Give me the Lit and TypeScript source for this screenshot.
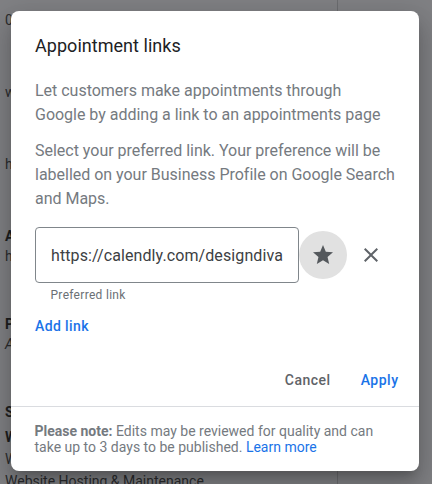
import { LitElement, html, css, svg } from "lit";
import { customElement } from "lit/decorators.js";

@customElement("page-backdrop")
class PageBackdrop extends LitElement {
  static styles = css`
    :host {
      display: block;
      height: 100%;
      background: #808184;
      font: 14px/20px Roboto, sans-serif;
      color: #2b2c2e;
    }
    .column {
      box-sizing: border-box;
      width: 338px;
      height: 100%;
      padding: 10px 0 0 5px;
      border-right: 1px solid #6c6d70;
      display: flex;
      flex-direction: column;
      white-space: nowrap;
    }
    .row { flex: none; height: 20px; }
    .gap-l { margin-top: 52px; }
    .gap-m { margin-top: 48px; }
    .gap-s { margin-top: 5px; }
    .gap-xs { margin-top: 2px; }
    .bold { font-weight: 700; color: #1d1e20; }
    .italic { font-style: italic; }
  `;
  render() {
    return html`<div class="column">
      <div class="row">0</div>
      <div class="row gap-l">w</div>
      <div class="row gap-l">h</div>
      <div class="row gap-l bold">A</div>
      <div class="row">h</div>
      <div class="row gap-m bold">P</div>
      <div class="row italic">A</div>
      <div class="row gap-m bold">S</div>
      <div class="row gap-s bold">W</div>
      <div class="row gap-xs">W</div>
      <div class="row gap-xs">Website Hosting &amp; Maintenance</div>
    </div>`;
  }
}

const star = svg`<path d="M12 17.27 18.18 21l-1.64-7.03L22 9.24l-7.19-.61L12 2 9.19 8.63 2 9.24l5.46 4.73L5.82 21z"/>`;
const cross = svg`<path d="M19 6.41 17.59 5 12 10.59 6.41 5 5 6.41 10.59 12 5 17.59 6.41 19 12 13.41 17.59 19 19 17.59 13.41 12z"/>`;

@customElement("app-root")
class AppRoot extends LitElement {
  static styles = css`
    :host {
      display: block;
      position: relative;
      height: 484px;
      overflow: hidden;
      font-family: Roboto, sans-serif;
      color: #757a7f;
    }
    .dialog {
      position: absolute;
      inset: 11px 13px 13px 11px;
      box-sizing: border-box;
      display: flex;
      flex-direction: column;
      background: #fff;
      border-radius: 8px;
      box-shadow: 0 8px 10px -5px rgba(0, 0, 0, 0.2),
        0 16px 24px 2px rgba(0, 0, 0, 0.14), 0 6px 30px 5px rgba(0, 0, 0, 0.12);
    }
    .content { flex: 1; padding: 23px 24px 0; }
    .title {
      margin: 0 0 21px;
      font-size: 18px;
      line-height: 24px;
      font-weight: 400;
      color: #202124;
      letter-spacing: 0.04px;
    }
    .text {
      margin: 0 0 12px;
      font-size: 16px;
      line-height: 24px;
      letter-spacing: -0.015px;
      white-space: nowrap;
    }
    .field-row { display: flex; align-items: center; margin-top: 16px; }
    .field {
      box-sizing: border-box;
      width: 264px;
      height: 56px;
      padding: 0 15px;
      display: flex;
      align-items: center;
      border: 1px solid #80868b;
      border-radius: 4px;
      font-size: 16px;
      letter-spacing: 0.1px;
      color: #3c4043;
      white-space: nowrap;
    }
    .icon {
      width: 48px;
      height: 48px;
      display: flex;
      align-items: center;
      justify-content: center;
      border-radius: 50%;
      fill: #5f6368;
    }
    .chosen { background: #e1e1e1; fill: #54585c; }
    .hint {
      padding-left: 15.5px;
      margin-top: 4px;
      font-size: 12px;
      line-height: 16px;
      letter-spacing: 0.3px;
      color: #6b7075;
    }
    .add, .button { font-size: 14px; line-height: 20px; font-weight: 500; letter-spacing: 0.38px; color: #1a73e8; }
    .add { margin-top: 13px; }
    .actions { display: flex; justify-content: flex-end; gap: 30px; padding: 0 20.5px 16px; }
    .button { letter-spacing: 0.5px; }
    .cancel { color: #5f6368; }
    .note {
      box-sizing: border-box;
      height: 65px;
      padding: 16px 24px 0 23.5px;
      border-top: 1px solid #dadce0;
      font-size: 14px;
      line-height: 16px;
      letter-spacing: 0;
      white-space: nowrap;
    }
    .link { color: #1a73e8; }
  `;
  render() {
    return html`
      <page-backdrop></page-backdrop>
      <div class="dialog">
        <div class="content">
          <h1 class="title">Appointment links</h1>
          <p class="text">Let customers make appointments through<br />Google by adding a link to an appointments page</p>
          <p class="text">Select your preferred link. Your preference will be<br />labelled on your Business Profile on Google Search<br />and Maps.</p>
          <div class="field-row">
            <div class="field">https://calendly.com/designdiva</div>
            <div class="icon chosen"><svg width="24" height="24" viewBox="0 0 24 24">${star}</svg></div>
            <div class="icon"><svg width="24" height="24" viewBox="0 0 24 24">${cross}</svg></div>
          </div>
          <div class="hint">Preferred link</div>
          <div class="add">Add link</div>
        </div>
        <div class="actions">
          <span class="button cancel">Cancel</span>
          <span class="button">Apply</span>
        </div>
        <div class="note"><b>Please note:</b> Edits may be reviewed for quality and can<br />take up to 3 days to be published. <span class="link">Learn more</span></div>
      </div>
    `;
  }
}
